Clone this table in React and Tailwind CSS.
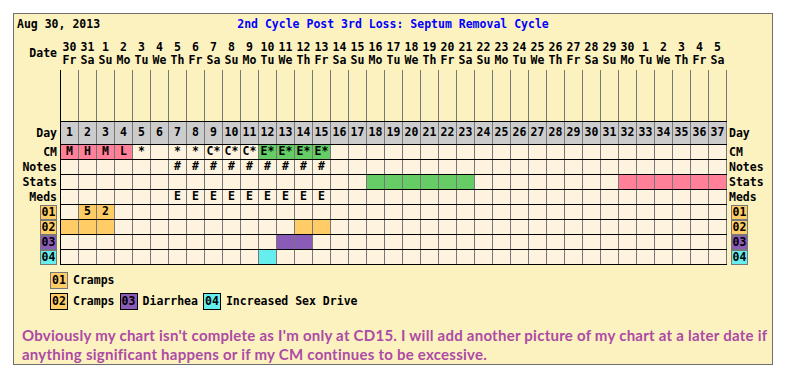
import React from "react";

const PINK = "bg-[#ff8098]";
const GREEN = "bg-[#66cc66]";
const ORANGE = "bg-[#ffcc66]";
const PURPLE = "bg-[#8a5cb8]";
const CYAN = "bg-[#66eeee]";
const CREAM = "bg-[#fdf3df]";

const WD = ["Su", "Mo", "Tu", "We", "Th", "Fr", "Sa"];
const dates = Array.from({ length: 37 }, (_, i) => {
  const d = new Date(2013, 7, 30 + i);
  return { n: d.getDate(), w: WD[d.getDay()] };
});

const range = (a, b) => {
  const r = [];
  for (let i = a; i <= b; i++) r.push(i);
  return r;
};

function buildRow(spec) {
  return Array.from({ length: 37 }, (_, i) => {
    const s = spec[i + 1];
    return s ? { bg: s.bg || CREAM, t: s.t || "" } : { bg: CREAM, t: "" };
  });
}

const cmSpec = {
  1: { bg: PINK, t: "M" },
  2: { bg: PINK, t: "H" },
  3: { bg: PINK, t: "M" },
  4: { bg: PINK, t: "L" },
  5: { t: "*" },
  7: { t: "*" },
  8: { t: "*" },
  9: { t: "C*" },
  10: { t: "C*" },
  11: { t: "C*" },
  12: { bg: GREEN, t: "E*" },
  13: { bg: GREEN, t: "E*" },
  14: { bg: GREEN, t: "E*" },
  15: { bg: GREEN, t: "E*" },
};
const notesSpec = {};
range(7, 15).forEach((i) => (notesSpec[i] = { t: "#" }));
const statsSpec = {};
range(18, 23).forEach((i) => (statsSpec[i] = { bg: GREEN }));
range(32, 37).forEach((i) => (statsSpec[i] = { bg: PINK }));
const medsSpec = {};
range(7, 15).forEach((i) => (medsSpec[i] = { t: "E" }));
const s01 = { 2: { bg: ORANGE, t: "5" }, 3: { bg: ORANGE, t: "2" } };
const s02 = {
  1: { bg: ORANGE },
  2: { bg: ORANGE },
  3: { bg: ORANGE },
  14: { bg: ORANGE },
  15: { bg: ORANGE },
};
const s03 = { 13: { bg: PURPLE }, 14: { bg: PURPLE } };
const s04 = { 12: { bg: CYAN } };

function Badge({ bg, text }) {
  return (
    <div
      className={`w-[17px] h-[15px] border border-[#777] ${bg} flex items-center justify-center leading-none`}
    >
      {text}
    </div>
  );
}

function Cells({ cells }) {
  return (
    <div className="flex border-l border-b border-black">
      {cells.map((c, i) => (
        <div
          key={i}
          className={`w-[18px] h-[14px] border-r border-[#777] flex items-center justify-center leading-none ${c.bg}`}
        >
          {c.t}
        </div>
      ))}
    </div>
  );
}

function DataRow({ left, right, cells }) {
  return (
    <div className="flex">
      <div className="w-[46px] h-[15px] shrink-0 flex items-center justify-end pr-[3px]">
        {left}
      </div>
      <Cells cells={cells} />
      <div className="h-[15px] flex items-center pl-[2px]">{right}</div>
    </div>
  );
}

function BadgeRow({ code, bg, cells }) {
  return (
    <div className="flex">
      <div className="w-[46px] h-[15px] shrink-0 flex items-center justify-end pr-[3px]">
        <Badge bg={bg} text={code} />
      </div>
      <Cells cells={cells} />
      <div className="h-[15px] flex items-center pl-[4px]">
        <Badge bg={bg} text={code} />
      </div>
    </div>
  );
}

export default function App() {
  return (
    <div className="w-[788px] h-[384px] bg-white pt-[13px] pl-[13px]">
      <div className="w-[760px] h-[352px] border border-[#6f6f6f] bg-[#fcf2c0] font-['DejaVu_Sans_Mono',monospace] font-bold text-[11.5px] text-black">
        {/* header */}
        <div className="grid grid-cols-[1fr_auto_1fr] h-[26px] pt-[3px] leading-[14px]">
          <div className="pl-[3px]">Aug 30, 2013</div>
          <div className="text-[#0000ff]">2nd Cycle Post 3rd Loss: Septum Removal Cycle</div>
          <div />
        </div>

        {/* date row */}
        <div className="flex h-[30px] pt-[1px]">
          <div className="w-[46px] shrink-0 flex items-center justify-end pr-[3px] pb-[3px]">
            Date
          </div>
          <div className="flex border-l border-transparent">
            {dates.map((d, i) => (
              <div
                key={i}
                className="w-[18px] border-r border-transparent flex flex-col items-center leading-[13px]"
              >
                <div>{d.n}</div>
                <div>{d.w}</div>
              </div>
            ))}
          </div>
        </div>

        {/* chart area */}
        <div className="flex">
          <div className="w-[46px] shrink-0" />
          <div className="flex border-l border-b border-black">
            {dates.map((_, i) => (
              <div key={i} className="w-[18px] h-[51px] border-r border-[#777]" />
            ))}
          </div>
        </div>

        {/* day row */}
        <div className="flex">
          <div className="w-[46px] h-[23px] shrink-0 flex items-center justify-end pr-[3px]">
            Day
          </div>
          <div className="flex border-l border-b border-black">
            {dates.map((_, i) => (
              <div
                key={i}
                className="w-[18px] h-[22px] border-r border-[#777] bg-[#cccccc] flex items-center justify-center leading-none"
              >
                {i + 1}
              </div>
            ))}
          </div>
          <div className="h-[23px] flex items-center pl-[2px]">Day</div>
        </div>

        <DataRow left="CM" right="CM" cells={buildRow(cmSpec)} />
        <DataRow left="Notes" right="Notes" cells={buildRow(notesSpec)} />
        <DataRow left="Stats" right="Stats" cells={buildRow(statsSpec)} />
        <DataRow left="Meds" right="Meds" cells={buildRow(medsSpec)} />
        <BadgeRow code="01" bg={ORANGE} cells={buildRow(s01)} />
        <BadgeRow code="02" bg={ORANGE} cells={buildRow(s02)} />
        <BadgeRow code="03" bg={PURPLE} cells={buildRow(s03)} />
        <BadgeRow code="04" bg={CYAN} cells={buildRow(s04)} />

        {/* legend */}
        <div className="pl-[36px] mt-[7px] flex flex-col gap-[4px]">
          <div className="flex items-center gap-[5px]">
            <div className={`w-[18px] h-[17px] border border-[#777] ${ORANGE} flex items-center justify-center leading-none`}>
              01
            </div>
            <span>Cramps</span>
          </div>
          <div className="flex items-center gap-[5px]">
            <div className={`w-[18px] h-[17px] border border-black ${ORANGE} flex items-center justify-center leading-none`}>
              02
            </div>
            <span>Cramps</span>
            <div className={`w-[18px] h-[17px] border border-black ${PURPLE} flex items-center justify-center leading-none`}>
              03
            </div>
            <span>Diarrhea</span>
            <div className={`w-[18px] h-[17px] border border-black ${CYAN} flex items-center justify-center leading-none`}>
              04
            </div>
            <span>Increased Sex Drive</span>
          </div>
        </div>

        {/* note */}
        <div className="mt-[15px] pl-[8px] font-['Lato',sans-serif] font-bold text-[15px] tracking-[0.25px] leading-[19px] text-[#ad4aa5] whitespace-nowrap">
          <div>
            Obviously my chart isn't complete as I'm only at CD15. I will add another picture of my chart at a later date if
          </div>
          <div>anything significant happens or if my CM continues to be excessive.</div>
        </div>
      </div>
    </div>
  );
}
